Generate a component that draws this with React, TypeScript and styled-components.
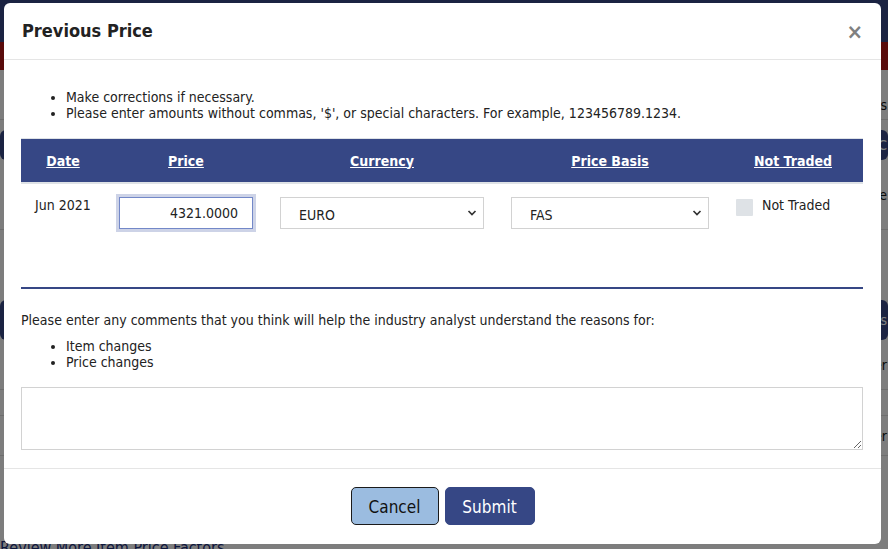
import React from 'react';
import styled, { createGlobalStyle } from 'styled-components';

const FONT = `"DejaVu Sans Condensed", "DejaVu Sans", sans-serif`;
const NAVY = '#364785';

const GlobalStyle = createGlobalStyle`
  html, body { margin: 0; padding: 0; }
  body {
    width: 888px;
    height: 549px;
    overflow: hidden;
    font-family: ${FONT};
    background: #fff;
    color: #222;
  }
  *, *::before, *::after { box-sizing: border-box; }
`;

/* ---------- background page (dimmed behind modal) ---------- */
const Page = styled.div`
  position: relative;
  width: 888px;
  height: 549px;
  overflow: hidden;
  background: #fafafa;
  display: flex;
  flex-direction: column;
`;
const TopBar = styled.div`
  height: 42px;
  background: ${NAVY};
`;
const RedBar = styled.div`
  height: 28px;
  background: #b21616;
`;
const PageContent = styled.div`
  display: flex;
  flex-direction: column;
  padding-top: 20px;
  font-size: 14px;
`;
const PageText = styled.div<{ $h?: number }>`
  height: ${(p) => p.$h ?? 26}px;
  line-height: ${(p) => p.$h ?? 26}px;
  text-align: right;
  padding-right: 1px;
  white-space: nowrap;
  color: #111;
  border-bottom: 1px solid #ddd;
`;
const SectionBar = styled.div<{ $mt: number; $h: number }>`
  margin-top: ${(p) => p.$mt}px;
  height: ${(p) => p.$h}px;
  background: ${NAVY};
  border-radius: 6px;
  color: #fff;
  line-height: ${(p) => p.$h}px;
  text-align: right;
  padding-right: 1px;
  white-space: nowrap;
`;
const PageLink = styled.div`
  margin-top: auto;
  color: #1a2f7a;
  text-decoration: underline;
  font-size: 16px;
  line-height: 14px;
  height: 8px;
`;

/* ---------- overlay & modal ---------- */
const Overlay = styled.div`
  position: absolute;
  inset: 0;
  background: rgba(0, 0, 0, 0.5);
`;
const Modal = styled.div`
  position: absolute;
  top: 3px;
  left: 4px;
  width: 877px;
  background: #fff;
  border-radius: 6px;
  display: flex;
  flex-direction: column;
  overflow: hidden;
`;
const ModalHeader = styled.div`
  display: flex;
  align-items: center;
  justify-content: space-between;
  height: 57px;
  padding: 0 18px;
  border-bottom: 1px solid #e5e5e5;
`;
const Title = styled.h4`
  margin: 0;
  font-size: 18px;
  line-height: 24px;
  font-weight: bold;
  color: #222;
`;
const CloseButton = styled.button`
  border: 0;
  background: transparent;
  padding: 2px 0 0;
  margin: 0;
  height: 24px;
  font-family: ${FONT};
  font-size: 22px;
  line-height: 22px;
  font-weight: bold;
  color: #808080;
  cursor: pointer;
`;
const ModalBody = styled.div`
  padding: 17px 18px 18px 17px;
  display: flex;
  flex-direction: column;
`;
const Bullets = styled.ul<{ $mt: number; $mb: number }>`
  margin: ${(p) => p.$mt}px 0 ${(p) => p.$mb}px;
  padding-left: 45px;
  font-size: 14px;
  line-height: 16px;
  color: #222;
`;

/* ---------- table ---------- */
const COLS = '84px 162px 230px 226px 140px';
const Table = styled.div`
  display: flex;
  flex-direction: column;
  width: 842px;
`;
const HeadRow = styled.div`
  display: grid;
  grid-template-columns: ${COLS};
  height: 46px;
  background: ${NAVY};
  border-top: 1px solid #dee2e6;
  border-bottom: 2px solid #dee2e6;
`;
const HeadCell = styled.div`
  display: flex;
  align-items: center;
  justify-content: center;
  color: #fff;
  font-weight: bold;
  font-size: 14px;
  text-decoration: underline;
`;
const DataRow = styled.div`
  display: grid;
  grid-template-columns: ${COLS};
  height: 103px;
  align-items: start;
`;
const TextCell = styled.div`
  padding: 11px 0 0 14px;
  font-size: 14px;
  line-height: 20px;
  color: #222;
`;
const CenterCell = styled.div`
  display: flex;
  justify-content: center;
  padding-top: 13px;
`;
const PriceInput = styled.input`
  width: 134px;
  height: 32px;
  border: 1px solid #7388c8;
  box-shadow: 0 0 0 3px #cdd3e7;
  outline: none;
  text-align: right;
  padding: 0 14px 0 6px;
  font-family: ${FONT};
  font-size: 14px;
  color: #222;
  background: #fff;
`;
const SelectWrap = styled.div<{ $w: number }>`
  position: relative;
  width: ${(p) => p.$w}px;
  height: 32px;
`;
const Select = styled.select`
  appearance: none;
  width: 100%;
  height: 32px;
  border: 1px solid #d2d2d2;
  border-radius: 0;
  background: #fff;
  padding: 3px 24px 0 18px;
  font-family: ${FONT};
  font-size: 14px;
  color: #222;
  outline: none;
`;
const Chevron = styled.svg`
  position: absolute;
  right: 7px;
  top: 13px;
  pointer-events: none;
`;
const CheckCell = styled.label`
  display: flex;
  align-items: flex-start;
  gap: 9px;
  padding: 11px 0 0 13px;
  font-size: 14px;
  line-height: 20px;
  color: #222;
`;
const Check = styled.input`
  appearance: none;
  width: 17px;
  height: 17px;
  margin: 4px 0 0;
  background: #dee2e6;
  border: 0;
  border-radius: 1px;
`;
const Divider = styled.div`
  height: 2px;
  background: ${NAVY};
`;
const Comment = styled.p`
  margin: 23px 0 0;
  font-size: 14px;
  line-height: 16px;
  color: #222;
`;
const TextArea = styled.textarea`
  display: block;
  width: 842px;
  height: 63px;
  border: 1px solid #d2d2d2;
  border-radius: 0;
  outline: none;
  font-family: ${FONT};
  font-size: 14px;
  padding: 6px;
`;
const ModalFooter = styled.div`
  display: flex;
  justify-content: center;
  gap: 6px;
  padding: 18px 0 19px;
  border-top: 1px solid #e5e5e5;
`;
const Button = styled.button<{ $primary?: boolean }>`
  height: 38px;
  width: ${(p) => (p.$primary ? 90 : 88)}px;
  border-radius: 5px;
  border: 1px solid ${(p) => (p.$primary ? NAVY : '#1b1b1b')};
  background: ${(p) => (p.$primary ? NAVY : '#9bbce0')};
  color: ${(p) => (p.$primary ? '#fff' : '#111')};
  font-family: ${FONT};
  font-size: 17px;
  padding: 2px 0 0;
  cursor: pointer;
`;

const ChevronIcon = () => (
  <Chevron width="10" height="6" viewBox="0 0 10 6">
    <path d="M1.5 1 L5 4.5 L8.5 1" fill="none" stroke="#333" strokeWidth="1.7" />
  </Chevron>
);

export default function App() {
  return (
    <>
      <GlobalStyle />
      <Page>
        <TopBar />
        <RedBar />
        <PageContent>
          <PageText $h={30}>s</PageText>
          <SectionBar $mt={10} $h={30}>C</SectionBar>
          <PageText $h={70}>te</PageText>
          <SectionBar $mt={70} $h={40}>s</SectionBar>
          <PageText $h={50}>er</PageText>
          <PageText $h={26}> </PageText>
          <PageText $h={40}>er</PageText>
        </PageContent>
        <PageLink>Review More Item Price Factors</PageLink>
        <Overlay />
        <Modal role="dialog" aria-label="Previous Price">
          <ModalHeader>
            <Title>Previous Price</Title>
            <CloseButton aria-label="Close">×</CloseButton>
          </ModalHeader>
          <ModalBody>
            <Bullets $mt={12} $mb={17}>
              <li>Make corrections if necessary.</li>
              <li>
                Please enter amounts without commas, '$', or special characters. For example,
                123456789.1234.
              </li>
            </Bullets>
            <Table>
              <HeadRow>
                <HeadCell>Date</HeadCell>
                <HeadCell>Price</HeadCell>
                <HeadCell>Currency</HeadCell>
                <HeadCell>Price Basis</HeadCell>
                <HeadCell>Not Traded</HeadCell>
              </HeadRow>
              <DataRow>
                <TextCell>Jun 2021</TextCell>
                <CenterCell>
                  <PriceInput defaultValue="4321.0000" />
                </CenterCell>
                <CenterCell>
                  <SelectWrap $w={204}>
                    <Select defaultValue="EURO">
                      <option>EURO</option>
                      <option>USD</option>
                    </Select>
                    <ChevronIcon />
                  </SelectWrap>
                </CenterCell>
                <CenterCell>
                  <SelectWrap $w={198}>
                    <Select defaultValue="FAS">
                      <option>FAS</option>
                      <option>FOB</option>
                    </Select>
                    <ChevronIcon />
                  </SelectWrap>
                </CenterCell>
                <CheckCell>
                  <Check type="checkbox" />
                  Not Traded
                </CheckCell>
              </DataRow>
              <Divider />
            </Table>
            <Comment>
              Please enter any comments that you think will help the industry analyst understand the
              reasons for:
            </Comment>
            <Bullets $mt={10} $mb={17}>
              <li>Item changes</li>
              <li>Price changes</li>
            </Bullets>
            <TextArea />
          </ModalBody>
          <ModalFooter>
            <Button>Cancel</Button>
            <Button $primary>Submit</Button>
          </ModalFooter>
        </Modal>
      </Page>
    </>
  );
}
